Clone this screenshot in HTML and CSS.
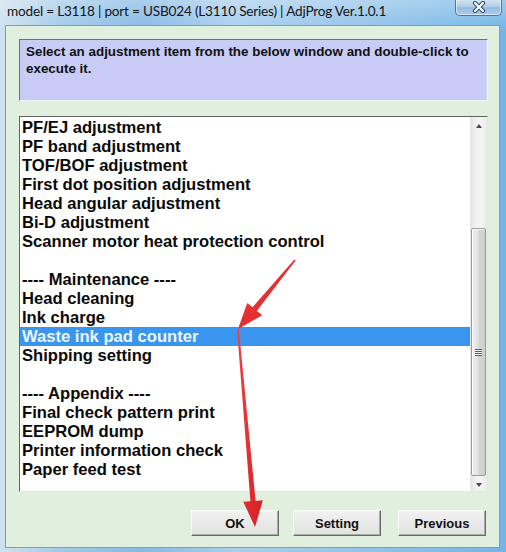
FILE: index.html
```html
<!DOCTYPE html>
<html>
<head>
<meta charset="utf-8">
<title>AdjProg</title>
<link rel="stylesheet" href="styles.css">
</head>
<body>
<div class="window">
  <div class="titlebar">
    <span class="title">model = L3118 | port = USB024 (L3110 Series) | AdjProg Ver.1.0.1</span>
    <div class="close">
      <svg width="14" height="12" viewBox="0 0 14 12">
        <path d="M3 2 L11 10 M11 2 L3 10" stroke="#2c4a6a" stroke-width="4.2" stroke-linecap="round"/>
        <path d="M3 2 L11 10 M11 2 L3 10" stroke="#ffffff" stroke-width="2.2" stroke-linecap="round"/>
      </svg>
    </div>
  </div>
  <div class="client">
    <div class="info">Select an adjustment item from the below window and double-click to execute it.</div>
    <div class="listbox">
      <div class="items">
        <div class="item">PF/EJ adjustment</div>
        <div class="item">PF band adjustment</div>
        <div class="item">TOF/BOF adjustment</div>
        <div class="item">First dot position adjustment</div>
        <div class="item">Head angular adjustment</div>
        <div class="item">Bi-D adjustment</div>
        <div class="item">Scanner motor heat protection control</div>
        <div class="item"></div>
        <div class="item">---- Maintenance ----</div>
        <div class="item">Head cleaning</div>
        <div class="item">Ink charge</div>
        <div class="item selected">Waste ink pad counter</div>
        <div class="item">Shipping setting</div>
        <div class="item"></div>
        <div class="item">---- Appendix ----</div>
        <div class="item">Final check pattern print</div>
        <div class="item">EEPROM dump</div>
        <div class="item">Printer information check</div>
        <div class="item">Paper feed test</div>
      </div>
      <div class="scrollbar">
        <div class="sb-btn"><span class="tri-up"></span></div>
        <div class="sb-track">
          <div class="sb-space"></div>
          <div class="thumb"><span class="grip"></span></div>
        </div>
        <div class="sb-btn"><span class="tri-down"></span></div>
      </div>
    </div>
    <div class="buttons">
      <button class="btn">OK</button>
      <button class="btn">Setting</button>
      <button class="btn btn-last">Previous</button>
    </div>
  </div>
  <svg class="arrows" width="506" height="552" viewBox="0 0 506 552">
    <defs>
      <linearGradient id="red" x1="0" y1="0" x2="1" y2="1">
        <stop offset="0" stop-color="#f0413f"/>
        <stop offset="1" stop-color="#d81f25"/>
      </linearGradient>
    </defs>
    <polygon fill="url(#red)" points="295.6,260.5 256.8,310.9 262.3,315.3 238,329 247.2,303 252.6,307.2 294.4,259.5"/>
    <polygon fill="url(#red)" points="238.9,330 255.6,500.9 262.8,500.3 255,527 243.3,501.8 250.4,501.3 237.1,330"/>
  </svg>
</div>
</body>
</html>
```

FILE: styles.css
```css
html, body {
  margin: 0;
  padding: 0;
}

body {
  width: 506px;
  height: 552px;
  overflow: hidden;
  font-family: "Liberation Sans", Arial, sans-serif;
}

.window {
  position: relative;
  width: 506px;
  height: 552px;
  display: flex;
  flex-direction: column;
  background:
    linear-gradient(180deg, rgba(255,255,255,0.3) 0, rgba(255,255,255,0) 30px),
    linear-gradient(90deg, #cfe2ef 0, #a3cae9 12%, #86b9e4 28%, #a9cfee 46%, #97c4ea 68%, #84bde8 86%, #73b6e6 100%);
  box-sizing: border-box;
}

.titlebar {
  height: 25px;
  flex: none;
  display: flex;
  align-items: flex-start;
  justify-content: space-between;
  position: relative;
}

.title {
  font-family: Lato, "Noto Sans", sans-serif;
  font-size: 13.6px;
  letter-spacing: -0.2px;
  color: #141414;
  padding: 3px 0 0 7px;
  white-space: nowrap;
}

.close {
  position: absolute;
  left: 455px;
  top: -1px;
  width: 45px;
  height: 16px;
  border: 1px solid #4d77a3;
  border-top: none;
  border-radius: 0 0 5px 5px;
  background: linear-gradient(180deg, #d6e7f5 0, #b3d0ea 45%, #92bde3 55%, #a8cdee 100%);
  box-shadow: inset 0 0 0 1px rgba(255,255,255,0.55);
  display: flex;
  align-items: center;
  justify-content: center;
}

.client {
  flex: 1;
  margin: 0 6px 4px 5px;
  border: 1px solid #7e9db8;
  background: #e1efdf;
  padding: 13px 11px 0 13px;
  display: flex;
  flex-direction: column;
}

.info {
  height: 62px;
  box-sizing: border-box;
  background: #c8ccf6;
  border-top: 1px solid #6f6f78;
  border-left: 1px solid #6f6f78;
  border-right: 1px solid #f4f4fb;
  border-bottom: 1px solid #f4f4fb;
  padding: 3px 4px 0 6px;
  font-size: 13.4px;
  font-weight: bold;
  line-height: 17px;
  color: #111;
}

.listbox {
  margin-top: 15px;
  height: 376px;
  box-sizing: border-box;
  background: #ffffff;
  border-top: 1px solid #646464;
  border-left: 1px solid #646464;
  border-right: 1px solid #e6e6e6;
  border-bottom: 1px solid #e6e6e6;
  display: flex;
}

.items {
  flex: 1;
  padding-top: 1px;
}

.item {
  height: 19px;
  line-height: 19px;
  font-size: 16.6px;
  font-weight: bold;
  color: #0a0a0a;
  padding-left: 2px;
  white-space: nowrap;
}

.item.selected {
  background: #3a95ee;
  color: #eef5ff;
}

.scrollbar {
  width: 17px;
  display: flex;
  flex-direction: column;
  background: linear-gradient(90deg, #e4e4e4 0, #f2f2f2 40%, #f4f4f4 70%, #e9e9e9 100%);
}

.sb-btn {
  height: 17px;
  flex: none;
  display: flex;
  align-items: center;
  justify-content: center;
}

.tri-up {
  width: 0;
  height: 0;
  border-left: 3.5px solid transparent;
  border-right: 3.5px solid transparent;
  border-bottom: 4px solid #4a4a4a;
}

.tri-down {
  width: 0;
  height: 0;
  border-left: 3.5px solid transparent;
  border-right: 3.5px solid transparent;
  border-top: 4px solid #4a4a4a;
}

.sb-track {
  flex: 1;
  display: flex;
  flex-direction: column;
}

.sb-space {
  height: 94px;
}

.thumb {
  height: 248px;
  margin: 0 1px;
  box-sizing: border-box;
  border: 1px solid #9b9b9b;
  border-radius: 2px;
  background: linear-gradient(90deg, #f1f1f1 0, #e2e2e2 45%, #d4d4d4 55%, #cdcdcd 100%);
  box-shadow: inset 1px 1px 0 rgba(255,255,255,0.8);
  display: flex;
  align-items: center;
  justify-content: center;
}

.grip {
  width: 7px;
  height: 7px;
  background: repeating-linear-gradient(180deg, #5e5e5e 0, #5e5e5e 1px, #f4f4f4 1px, #f4f4f4 2px);
}

.buttons {
  margin-top: 18px;
  display: flex;
  justify-content: flex-end;
  gap: 14px;
  padding-right: 2px;
}

.btn {
  width: 88px;
  height: 26px;
  box-sizing: border-box;
  margin: 0;
  padding: 0;
  font-family: "Liberation Sans", Arial, sans-serif;
  font-size: 13px;
  font-weight: bold;
  color: #111;
  background: linear-gradient(180deg, #f2f2f2 0, #e9e9e9 50%, #e2e2e2 100%);
  border-top: 1px solid #fbfbfb;
  border-left: 1px solid #fbfbfb;
  border-right: 1px solid #6b6b6b;
  border-bottom: 1px solid #6b6b6b;
  box-shadow: inset -1px -1px 0 #a9a9a9;
  border-radius: 0;
}

.btn-last {
  margin-left: 3px;
}

.arrows {
  position: absolute;
  left: 0;
  top: 0;
  pointer-events: none;
}
```
